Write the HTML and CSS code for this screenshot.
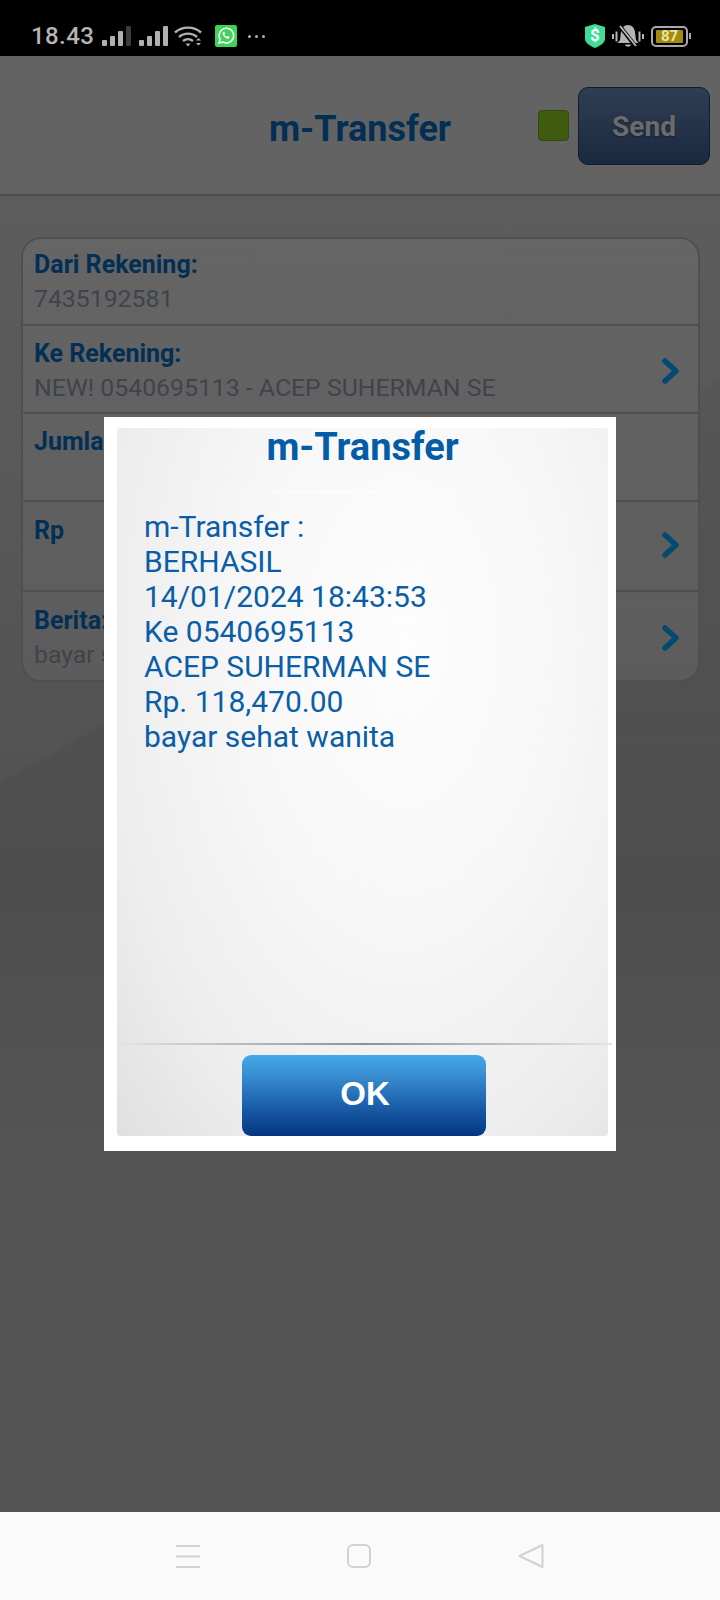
FILE: index.html
```html
<!DOCTYPE html>
<html lang="en">
<head>
    <meta charset="UTF-8">
    <meta name="viewport" content="width=device-width, initial-scale=1.0">
    <title>m-Transfer</title>
    <link rel="stylesheet" href="styles.css">
</head>
<body>
    <div class="phone">
        <div class="status-bar">
            <span class="time">18.43</span>
            <svg class="signal" width="30" height="20" viewBox="0 0 30 20">
                <rect x="0" y="14" width="5" height="6" rx="1" fill="#b0b0b0"/>
                <rect x="8" y="10" width="5" height="10" rx="1" fill="#b0b0b0"/>
                <rect x="16" y="5" width="5" height="15" rx="1" fill="#b0b0b0"/>
                <rect x="24" y="0" width="5" height="20" rx="1" fill="#3c3c3c"/>
            </svg>
            <svg class="signal" width="30" height="20" viewBox="0 0 30 20">
                <rect x="0" y="14" width="5" height="6" rx="1" fill="#b0b0b0"/>
                <rect x="8" y="10" width="5" height="10" rx="1" fill="#b0b0b0"/>
                <rect x="16" y="5" width="5" height="15" rx="1" fill="#b0b0b0"/>
                <rect x="24" y="0" width="5" height="20" rx="1" fill="#b0b0b0"/>
            </svg>
            <svg class="wifi" width="29" height="22" viewBox="0 0 29 22" fill="none" stroke="#b0b0b0" stroke-width="2.4">
                <path d="M1 7.500C8 1 20 1 27 7.500"/>
                <path d="M5 12C10 7.500 18 7.500 23 12"/>
                <path d="M9 16C12 13.500 16 13.500 19 16"/>
                <path d="M11.500 18.500h5l-2.500 3z" fill="#b0b0b0" stroke="none"/>
                <path d="M22 15.500h5l-2.500-2.500zM22 18h5l-2.500 2.500z" fill="#b0b0b0" stroke="none"/>
            </svg>
            <svg class="whatsapp" width="22" height="22" viewBox="0 0 22 22">
                <rect width="22" height="22" rx="2" fill="#3fd457"/>
                <path d="M4 18l1.100-3.800A7.300 7.300 0 1 1 8 17z" fill="none" stroke="#fff" stroke-width="1.500"/>
                <path d="M8.300 6.800c-1 .8-1 2.200.2 4 1.200 1.700 2.700 2.800 4.200 2.900 1 0 1.900-.8 1.800-1.700l-2-1-.8.900c-1-.4-1.800-1.200-2.300-2.200l.7-.9-.8-2z" fill="#fff"/>
            </svg>
            <span class="more-dots">
                <span class="dot"></span>
                <span class="dot"></span>
                <span class="dot"></span>
            </span>
            <span class="status-spacer"></span>
            <svg class="shield" width="20" height="24" viewBox="0 0 20 24">
                <path d="M10 0l10 3v12c0 4-5 7-10 9-5-2-10-5-10-9V3z" fill="#3ddc97"/>
                <text x="10" y="17" class="shield-text">$</text>
            </svg>
            <svg class="bell" width="32" height="24" viewBox="0 0 32 24">
                <path d="M16 1c4 0 6.500 3 7 7l1 8 2.500 3H5.500L8 16l1-8c.5-4 3-7 7-7z" fill="#b4b4b4"/>
                <path d="M13 20.500h6c-.5 3-5.500 3-6 0z" fill="#b4b4b4"/>
                <path d="M7 1l17 22" stroke="#000" stroke-width="4"/>
                <path d="M8 2l16 20" stroke="#b4b4b4" stroke-width="2"/>
                <rect x="0" y="10" width="2" height="5" fill="#b4b4b4"/>
                <rect x="3.500" y="7.500" width="2" height="10" fill="#b4b4b4"/>
                <rect x="26.500" y="7.500" width="2" height="10" fill="#b4b4b4"/>
                <rect x="30" y="10" width="2" height="5" fill="#b4b4b4"/>
            </svg>
            <span class="battery">
                <span class="battery-level">87</span>
            </span>
        </div>

        <div class="screen">
            <div class="app-bar">
                <h1 class="app-title">m-Transfer</h1>
                <span class="indicator"></span>
                <div class="send-btn">Send</div>
            </div>

            <div class="content">
                <div class="card">
                    <div class="row">
                        <div class="row-text">
                            <div class="row-label">Dari Rekening:</div>
                            <div class="row-value">7435192581</div>
                        </div>
                    </div>
                    <div class="row">
                        <div class="row-text">
                            <div class="row-label">Ke Rekening:</div>
                            <div class="row-value">NEW! 0540695113 - ACEP SUHERMAN SE</div>
                        </div>
                        <svg class="chevron" width="20" height="28" viewBox="0 0 20 28"><path d="M4 4l11 10L4 24"/></svg>
                    </div>
                    <div class="row">
                        <div class="row-text">
                            <div class="row-label">Jumlah:</div>
                            <div class="row-value">&nbsp;</div>
                        </div>
                    </div>
                    <div class="row row-tall">
                        <div class="row-text">
                            <div class="row-label">Rp</div>
                            <div class="row-value">&nbsp;</div>
                        </div>
                        <svg class="chevron" width="20" height="28" viewBox="0 0 20 28"><path d="M4 4l11 10L4 24"/></svg>
                    </div>
                    <div class="row row-last">
                        <div class="row-text">
                            <div class="row-label">Berita:</div>
                            <div class="row-value">bayar sehat wanita</div>
                        </div>
                        <svg class="chevron" width="20" height="28" viewBox="0 0 20 28"><path d="M4 4l11 10L4 24"/></svg>
                    </div>
                </div>
            </div>

            <div class="dialog">
                <div class="dialog-inner">
                    <h2 class="dialog-title">m-Transfer</h2>
                    <div class="dialog-rule"></div>
                    <div class="dialog-message">
                        m-Transfer :<br>
                        BERHASIL<br>
                        14/01/2024 18:43:53<br>
                        Ke 0540695113<br>
                        ACEP SUHERMAN SE<br>
                        Rp. 118,470.00<br>
                        bayar sehat wanita
                    </div>
                    <div class="dialog-footer">
                        <div class="ok-btn">OK</div>
                    </div>
                </div>
            </div>
        </div>

        <div class="nav-bar">
            <svg width="24" height="24" viewBox="0 0 24 24" fill="none" stroke="#d2d2d2" stroke-width="2">
                <path d="M0 2h24M0 12.500h24M0 23h24"/>
            </svg>
            <svg width="24" height="24" viewBox="0 0 24 24" fill="none" stroke="#d2d2d2" stroke-width="2">
                <rect x="1" y="1" width="22" height="22" rx="5"/>
            </svg>
            <svg width="26" height="26" viewBox="0 0 26 26" fill="none" stroke="#d2d2d2" stroke-width="2" stroke-linejoin="round">
                <path d="M24.500 2v22L1.500 13z"/>
            </svg>
        </div>
    </div>
</body>
</html>
```

FILE: styles.css
```css
body {
    margin: 0;
    font-family: Roboto, "Liberation Sans", sans-serif;
}
.phone {
    width: 720px;
    height: 1600px;
    display: flex;
    flex-direction: column;
    overflow: hidden;
}

/* status bar */
.status-bar {
    height: 56px;
    background-color: #000;
    display: flex;
    align-items: center;
    padding: 16px 32px 0 31px;
    box-sizing: border-box;
    flex-shrink: 0;
}
.time {
    color: #b5b5b5;
    font-size: 24px;
    font-weight: 500;
    letter-spacing: 0.4px;
    margin-right: 8px;
}
.signal {
    margin-right: 7px;
}
.wifi {
    margin-left: -2px;
    margin-right: 12px;
}
.more-dots {
    display: flex;
    gap: 4px;
    margin-left: 11px;
}
.dot {
    width: 3px;
    height: 3px;
    border-radius: 50%;
    background-color: #b0b0b0;
}
.status-spacer {
    flex: 1;
}
.shield-text {
    fill: #fff;
    font-size: 17px;
    font-weight: 700;
    text-anchor: middle;
}
.bell {
    margin-left: 7px;
    margin-right: 7px;
}
.battery {
    width: 33px;
    height: 17px;
    border: 2px solid #aaa;
    border-radius: 5px;
    display: flex;
    align-items: center;
    justify-content: center;
    position: relative;
}
.battery::after {
    content: "";
    position: absolute;
    right: -5px;
    top: 5px;
    width: 2px;
    height: 6px;
    background-color: #aaa;
}
.battery-level {
    width: 27px;
    height: 13px;
    background-color: #a58a10;
    border-radius: 1px;
    color: #ebe3a4;
    font-size: 15px;
    font-weight: 700;
    line-height: 13px;
    text-align: center;
}

/* main screen, dimmed behind the dialog */
.screen {
    flex: 1;
    display: flex;
    flex-direction: column;
    position: relative;
}
.app-bar {
    height: 140px;
    box-sizing: border-box;
    flex-shrink: 0;
    background-color: #636363;
    border-bottom: 2px solid #4b4b4b;
    display: flex;
    align-items: center;
    padding: 0 10px 0 0;
    position: relative;
}
.app-title {
    margin: 0;
    padding-top: 8px;
    position: absolute;
    left: 0;
    right: 0;
    text-align: center;
    font-size: 36px;
    font-weight: 700;
    color: #032f55;
}
.indicator {
    width: 31px;
    height: 31px;
    box-sizing: border-box;
    margin-left: auto;
    margin-right: 9px;
    background-color: #3f5b10;
    border: 1px solid #324a10;
    border-radius: 4px;
    position: relative;
}
.send-btn {
    width: 132px;
    height: 78px;
    box-sizing: border-box;
    margin-top: 2px;
    padding-top: 1px;
    background: linear-gradient(#2f3e55, #1a2940);
    border: 1px solid #111c2c;
    border-radius: 10px;
    color: #6b6b6b;
    font-size: 28px;
    font-weight: 700;
    display: flex;
    align-items: center;
    justify-content: center;
    text-shadow: 0 1px 2px #1a2030;
    position: relative;
}
.content {
    flex: 1;
    padding: 41px 20px 0 21px;
    background: linear-gradient(#5a5a5a 0, #505050 500px, #4e4e4e 700px, #555 1000px);
    position: relative;
}
.content::before {
    content: "";
    position: absolute;
    inset: 0;
    background-color: rgba(255, 255, 255, 0.025);
    clip-path: polygon(0 0, 720px 0, 720px 184px, 0 587px);
}
.card {
    position: relative;
    background: linear-gradient(#656565, #5c5c5c);
    border: 2px solid #4f4f4f;
    border-radius: 20px;
    overflow: hidden;
}
.row {
    height: 88px;
    box-sizing: border-box;
    display: flex;
    align-items: center;
    justify-content: space-between;
    padding: 4px 17px 0 11px;
    border-top: 2px solid #4f4f4f;
}
.row:first-child {
    height: 85px;
    padding-top: 0;
    border-top: 0;
}
.row-tall {
    height: 90px;
}
.row-last {
    height: 90px;
}
.row-tall .chevron {
    margin-top: -7px;
}
.row-label {
    font-size: 25px;
    font-weight: 700;
    line-height: 34px;
    color: #032f55;
}
.row-value {
    font-size: 24.8px;
    line-height: 34px;
    color: #3f444b;
}
.chevron {
    fill: none;
    stroke: #034a70;
    stroke-width: 5.5;
    stroke-linejoin: round;
    stroke-linecap: round;
}

/* alert dialog */
.dialog {
    position: absolute;
    left: 104px;
    top: 361px;
    width: 512px;
    height: 734px;
    box-sizing: border-box;
    padding: 11px 8px 15px 13px;
    background-color: #fff;
}
.dialog-inner {
    height: 100%;
    display: flex;
    flex-direction: column;
    border-radius: 3px;
    background: radial-gradient(ellipse at 58% 30%, #fdfdfd 0%, #f7f7f7 40%, #ededed 75%, #e0e0e0 100%);
}
.dialog-title {
    margin: 0;
    height: 63px;
    line-height: 38px;
    text-align: center;
    font-size: 38px;
    font-weight: 700;
    color: #045ca6;
}
.dialog-rule {
    height: 1px;
    background: linear-gradient(90deg, rgba(255,255,255,0) 5%, #fff 50%, rgba(255,255,255,0) 95%);
}
.dialog-message {
    flex: 1;
    padding: 17px 0 0 27px;
    font-size: 30px;
    line-height: 35px;
    color: #0a5ea8;
}
.dialog-footer {
    position: relative;
    height: 93px;
    display: flex;
    justify-content: center;
    align-items: flex-end;
}
.dialog-footer::before {
    content: "";
    position: absolute;
    top: 0;
    left: 0;
    right: -4px;
    height: 2px;
    background: linear-gradient(90deg, #e4e4e8, #8a90a0 50%, #e4e4e8);
}
.ok-btn {
    width: 244px;
    height: 81px;
    box-sizing: border-box;
    padding: 0 0 4px 2px;
    margin-left: 3px;
    border-radius: 9px;
    background: linear-gradient(#45a9ea 0, #3c93d6 20%, #1a5ca8 65%, #03367f 100%);
    color: #fff;
    font-family: "Liberation Sans", Arial, sans-serif;
    font-size: 33px;
    font-weight: 700;
    display: flex;
    align-items: center;
    justify-content: center;
}

/* android nav */
.nav-bar {
    height: 88px;
    flex-shrink: 0;
    box-sizing: border-box;
    background-color: #fafafa;
    display: flex;
    align-items: center;
    justify-content: center;
    gap: 147px;
}
```
